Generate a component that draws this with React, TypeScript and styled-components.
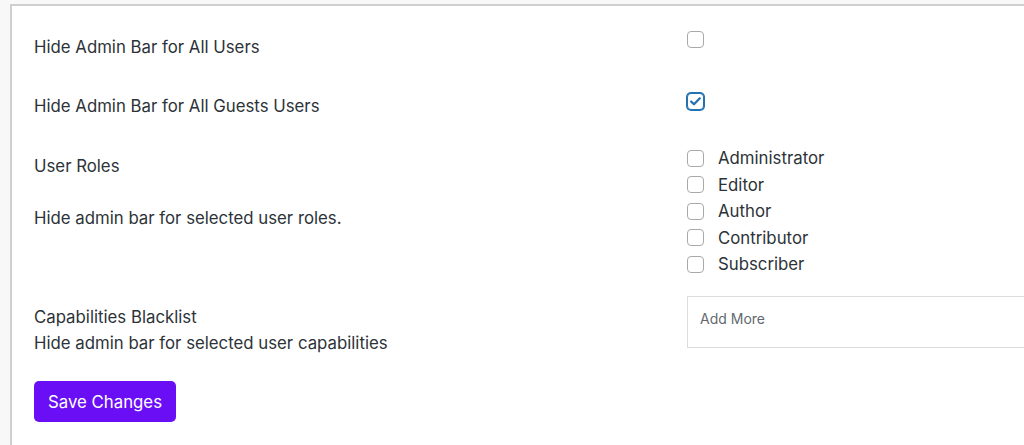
import React from "react";
import styled, { createGlobalStyle } from "styled-components";

const Global = createGlobalStyle`
  html, body { margin: 0; padding: 0; }
  body {
    background: #f8f8f8;
    font-family: Inter, "Liberation Sans", Arial, sans-serif;
    color: #2c3338;
    overflow: hidden;
  }
`;

const Page = styled.div`
  padding: 4px 0 0 10px;
  height: 445px;
  box-sizing: border-box;
`;

const Panel = styled.form`
  background: #fff;
  border-top: 2px solid #cfcfcf;
  border-left: 2px solid #cfcfcf;
  padding: 0 0 24px 22px;
  height: 100%;
  box-sizing: border-box;
`;

const Row = styled.div<{ $h?: number }>`
  display: grid;
  grid-template-columns: 653px 1fr;
  min-height: ${(p) => (p.$h ? `${p.$h}px` : "auto")};
`;

const Label = styled.div<{ $pt: number; $lh?: number }>`
  padding-top: ${(p) => p.$pt}px;
  font-size: 16.8px;
  line-height: ${(p) => p.$lh ?? 20}px;
`;

const Desc = styled.p<{ $mt: number }>`
  margin: ${(p) => p.$mt}px 0 0;
`;

const Field = styled.div<{ $pt: number }>`
  padding-top: ${(p) => p.$pt}px;
  min-width: 0;
`;

const Box = styled.span<{ $checked?: boolean }>`
  display: inline-flex;
  align-items: center;
  justify-content: center;
  width: 17px;
  height: 17px;
  box-sizing: border-box;
  border-radius: 4px;
  border: ${(p) => (p.$checked ? "1.5px solid #2271b1" : "1.5px solid #a7aaad")};
  box-shadow: ${(p) => (p.$checked ? "0 0 0 1px #2271b1" : "none")};
  background: #fff;
  flex: none;
`;

const List = styled.div`
  display: flex;
  flex-direction: column;
`;

const Option = styled.label`
  display: flex;
  align-items: center;
  gap: 14px;
  height: 26.5px;
  font-size: 16.8px;
`;

const Input = styled.div`
  width: 100%;
  height: 52px;
  box-sizing: border-box;
  border: 1px solid #dcdcde;
  border-right: none;
  background: #fff;
  padding: 0 12px 8px;
  display: flex;
  align-items: center;
  font-size: 14px;
  color: #646970;
`;

const Button = styled.button`
  margin-top: 25px;
  height: 41px;
  padding: 0 14px;
  background: #6a0ff5;
  color: #fff;
  border: none;
  border-radius: 5px;
  font-family: inherit;
  font-size: 16.8px;
`;

const Check = ({ checked }: { checked?: boolean }) => (
  <Box $checked={checked}>
    {checked && (
      <svg width="11" height="9" viewBox="0 0 11 9">
        <path d="M1.2 4.6 L4 7.3 L9.8 1.3" fill="none" stroke="#2271b1" strokeWidth="2.2" strokeLinecap="round" strokeLinejoin="round" />
      </svg>
    )}
  </Box>
);

const roles = ["Administrator", "Editor", "Author", "Contributor", "Subscriber"];

export default function App() {
  return (
    <>
      <Global />
      <Page>
        <Panel onSubmit={(e) => e.preventDefault()}>
          <Row $h={59}>
            <Label $pt={31}>Hide Admin Bar for All Users</Label>
            <Field $pt={25}>
              <Check />
            </Field>
          </Row>
          <Row $h={60}>
            <Label $pt={31}>Hide Admin Bar for All Guests Users</Label>
            <Field $pt={25}>
              <Check checked />
            </Field>
          </Row>
          <Row $h={161}>
            <Label $pt={31}>
              User Roles
              <Desc $mt={32}>Hide admin bar for selected user roles.</Desc>
            </Label>
            <Field $pt={20}>
              <List>
                {roles.map((r) => (
                  <Option key={r}>
                    <Check />
                    {r}
                  </Option>
                ))}
              </List>
            </Field>
          </Row>
          <Row>
            <Label $pt={18} $lh={26}>
              Capabilities Blacklist
              <Desc $mt={0}>Hide admin bar for selected user capabilities</Desc>
            </Label>
            <Field $pt={10}>
              <Input>Add More</Input>
            </Field>
          </Row>
          <Button type="submit">Save Changes</Button>
        </Panel>
      </Page>
    </>
  );
}
